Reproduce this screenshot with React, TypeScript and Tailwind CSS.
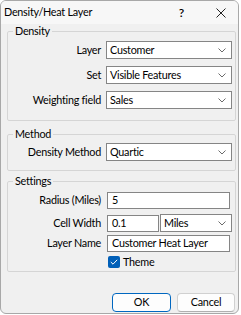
import React from "react";

function Chevron() {
  return (
    <svg width="8" height="5" viewBox="0 0 8 5" className="shrink-0">
      <path d="M0.5 0.5 L4 4 L7.5 0.5" fill="none" stroke="#6b6b6b" strokeWidth="1" />
    </svg>
  );
}

function Combo({ value, className = "" }: { value: string; className?: string }) {
  return (
    <div
      className={`flex h-[18px] items-center justify-between border border-[#858585] bg-white pl-[3px] pr-[5px] ${className}`}
    >
      <span className="leading-none">{value}</span>
      <Chevron />
    </div>
  );
}

function TextBox({ value, className = "" }: { value: string; className?: string }) {
  return (
    <div className={`flex h-[17px] items-center border border-[#858585] bg-white pl-[4px] ${className}`}>
      <span className="leading-none">{value}</span>
    </div>
  );
}

function Label({ text }: { text: string }) {
  return <div className="w-[93px] shrink-0 text-right leading-none">{text}</div>;
}

export default function App() {
  return (
    <div className="h-[315px] w-[241px] bg-white font-['Lato',sans-serif] text-[10.8px] tracking-[-0.25px] text-black">
      <div className="flex h-[314px] w-[239px] flex-col overflow-hidden rounded-[6px] border border-[#a8a8a8] bg-[#f0f0f0]">
        {/* title bar */}
        <div className="flex h-[23px] shrink-0 items-center bg-[#f7f7f7] pl-[3px]">
          <span>Density/Heat Layer</span>
          <span className="ml-auto text-[12px] font-semibold">?</span>
          <svg width="10" height="10" viewBox="0 0 10 10" className="ml-[32px] mr-[12px]">
            <path d="M0.5 0.5 L9.5 9.5 M9.5 0.5 L0.5 9.5" stroke="#222" strokeWidth="1" />
          </svg>
        </div>

        <div className="flex flex-col pl-[6px] pr-[2px]">
          {/* Density */}
          <fieldset className="rounded-[2px] border border-[#d5d5d5] pb-[11px]">
            <legend className="ml-[5px] px-[2px] leading-[14px]">Density</legend>
            <div className="mt-[3px] flex flex-col gap-[7px]">
              <div className="flex items-center">
                <Label text="Layer" />
                <Combo value="Customer" className="ml-[5px] w-[126px]" />
              </div>
              <div className="flex items-center">
                <Label text="Set" />
                <Combo value="Visible Features" className="ml-[5px] w-[126px]" />
              </div>
              <div className="flex items-center">
                <Label text="Weighting field" />
                <Combo value="Sales" className="ml-[5px] w-[126px]" />
              </div>
            </div>
          </fieldset>

          {/* Method */}
          <fieldset className="mt-[6px] rounded-[2px] border border-[#d5d5d5] pb-[9px]">
            <legend className="ml-[5px] px-[2px] leading-[14px]">Method</legend>
            <div className="mt-[2px] flex items-center">
              <Label text="Density Method" />
              <Combo value="Quartic" className="ml-[5px] w-[126px]" />
            </div>
          </fieldset>

          {/* Settings */}
          <fieldset className="mt-[3px] rounded-[2px] border border-[#d5d5d5] pb-[3px]">
            <legend className="ml-[5px] px-[2px] leading-[14px]">Settings</legend>
            <div className="mt-[4px] flex items-center">
              <Label text="Radius (Miles)" />
              <TextBox value="5" className="ml-[6px] w-[123px]" />
            </div>
            <div className="mt-[5px] flex items-center">
              <Label text="Cell Width" />
              <TextBox value="0.1" className="ml-[6px] w-[52px]" />
              <Combo value="Miles" className="ml-[1px] h-[17px] w-[72px]" />
            </div>
            <div className="mt-[3px] flex items-center">
              <Label text="Layer Name" />
              <TextBox value="Customer Heat Layer" className="ml-[6px] w-[123px]" />
            </div>
            <div className="mt-[4px] flex items-center pl-[100px]">
              <div className="flex h-[12px] w-[12px] items-center justify-center rounded-[2px] bg-[#005fb8]">
                <svg width="8" height="6" viewBox="0 0 8 6">
                  <path d="M0.8 3 L3 5.2 L7.2 0.8" fill="none" stroke="#fff" strokeWidth="1" />
                </svg>
              </div>
              <span className="ml-[3px] leading-none">Theme</span>
            </div>
          </fieldset>

          {/* buttons */}
          <div className="mt-[21px] flex justify-end gap-[6px] pr-[1px]">
            <button className="h-[19px] w-[59px] rounded-[4px] border border-[#0067c0] bg-[#fdfdfd] leading-none">
              OK
            </button>
            <button className="h-[19px] w-[58px] rounded-[4px] border border-[#d0d0d0] border-b-[#b0b0b0] bg-[#fdfdfd] leading-none">
              Cancel
            </button>
          </div>
        </div>
      </div>
    </div>
  );
}
